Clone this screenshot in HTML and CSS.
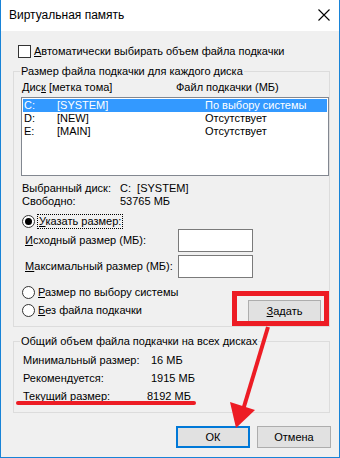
FILE: index.html
```html
<!DOCTYPE html>
<html lang="ru">
<head>
<meta charset="utf-8">
<title>Виртуальная память</title>
<link rel="stylesheet" href="styles.css">
</head>
<body>
<div class="window">
  <div class="titlebar">
    <span class="title">Виртуальная память</span>
    <svg class="close" width="12" height="12" viewBox="0 0 12 12"><path d="M0.5 0.5 L11.5 11.5 M11.5 0.5 L0.5 11.5" stroke="#000" stroke-width="1.1" fill="none"/></svg>
  </div>
  <div class="content">
    <div class="check-row"><span class="checkbox"></span><span class="check-label"><u>А</u>втоматически выбирать объем файла подкачки</span></div>

    <fieldset class="group g1">
      <legend>Размер файла подкачки для каждого диска</legend>
      <div class="list-head"><span class="col-drive">Дис<u>к</u> [метка тома]</span><span>Файл подкачки (МБ)</span></div>
      <div class="listbox">
        <div class="lrow sel"><span class="c1">C:</span><span class="c2">[SYSTEM]</span><span>По выбору системы</span></div>
        <div class="lrow"><span class="c1">D:</span><span class="c2">[NEW]</span><span>Отсутствует</span></div>
        <div class="lrow"><span class="c1">E:</span><span class="c2">[MAIN]</span><span>Отсутствует</span></div>
      </div>
      <div class="info">
        <div class="irow"><span class="ilabel">Выбранный диск:</span><span>C:&nbsp; [SYSTEM]</span></div>
        <div class="irow"><span class="ilabel">Свободно:</span><span>53765 МБ</span></div>
      </div>
      <div class="radio-row custom"><span class="radio on"></span><span class="focus"><u>У</u>казать размер:</span></div>
      <div class="field-row"><span class="flabel"><u>И</u>сходный размер (МБ):</span><span class="input"></span></div>
      <div class="field-row second"><span class="flabel"><u>М</u>аксимальный размер (МБ):</span><span class="input"></span></div>
      <div class="bottom-row">
        <div class="radios">
          <div class="radio-row"><span class="radio"></span><span class="rlabel"><u>Р</u>азмер по выбору системы</span></div>
          <div class="radio-row"><span class="radio"></span><span class="rlabel"><u>Б</u>ез файла подкачки</span></div>
        </div>
        <button class="btn set"><u>З</u>адать</button>
      </div>
    </fieldset>

    <fieldset class="group g2">
      <legend>Общий объем файла подкачки на всех дисках</legend>
      <div class="trow"><span class="tlabel">Минимальный размер:</span><span>16 МБ</span></div>
      <div class="trow"><span class="tlabel">Рекомендуется:</span><span>1915 МБ</span></div>
      <div class="trow"><span class="tlabel">Текущий размер:</span><span class="shift">8192 МБ</span></div>
    </fieldset>

    <div class="buttons">
      <button class="btn ok">ОК</button>
      <button class="btn">Отмена</button>
    </div>
  </div>

  <svg class="annot" width="340" height="458" viewBox="0 0 340 458">
    <rect x="234.5" y="293.5" width="92" height="30" fill="none" stroke="#ed1c24" stroke-width="5"/>
    <line x1="18" y1="403" x2="194" y2="403" stroke="#ed1c24" stroke-width="4" stroke-linecap="round"/>
    <line x1="268" y1="327" x2="243" y2="410" stroke="#ed1c24" stroke-width="4"/>
    <polygon points="230,402 255,410 236,428" fill="#ed1c24"/>
  </svg>
</div>
</body>
</html>
```

FILE: styles.css
```css
* { box-sizing: border-box; }
html, body { margin: 0; padding: 0; }
body {
  font-family: "Liberation Sans", Arial, sans-serif;
  font-size: 11px;
  line-height: 15px;
  color: #000;
  background: #f0f0f0;
  white-space: nowrap;
}
u { text-decoration: underline; text-underline-offset: 1px; }

.window {
  position: relative;
  width: 340px;
  height: 458px;
  border: 1px solid #1883d7;
  border-top: none;
  background: #f0f0f0;
  overflow: hidden;
}
.titlebar {
  height: 31px;
  background: #fff;
  display: flex;
  align-items: center;
  justify-content: space-between;
  padding: 0 9px 0 8px;
}
.title { font-size: 12px; }
.close { display: block; margin-top: -1px; }

.content {
  padding: 0 9px 0 12px;
}

.check-row {
  margin-top: 13px;
  height: 15px;
  display: flex;
  align-items: center;
  padding-left: 5px;
}
.checkbox {
  width: 13px;
  height: 13px;
  border: 1px solid #333;
  background: #fff;
  margin-right: 3px;
}

.group {
  margin: 0;
  border: 1px solid #dcdcdc;
  padding: 0 0 0 7px;
  min-width: 0;
}
.group legend {
  padding: 0 1px;
  margin-left: -1px;
  line-height: 15px;
  height: 15px;
}
.g1 { margin-top: 5px; padding-top: 1px; padding-bottom: 4px; }

.list-head {
  height: 15px;
  display: flex;
  padding-left: 1px;
}
.col-drive { width: 154px; }

.listbox {
  margin-top: 2px;
  height: 79px;
  background: #fff;
  border: 1px solid #828790;
  padding: 1px;
}
.lrow {
  height: 13px;
  line-height: 13px;
  display: flex;
  padding-left: 1px;
}
.lrow.sel { background: #3399ff; color: #fff; }
.c1 { width: 33px; }
.c2 { width: 148px; }

.info { margin-top: 6px; }
.irow { height: 13px; line-height: 13px; display: flex; padding-left: 1px; }
.ilabel { width: 98px; }

.radio-row {
  height: 18px;
  display: flex;
  align-items: center;
  padding-left: 1px;
}
.radio-row.custom { margin-top: 6px; height: 15px; }
.radio {
  width: 13px;
  height: 13px;
  border: 1px solid #333;
  border-radius: 50%;
  background: #fff;
  display: flex;
  align-items: center;
  justify-content: center;
  flex: none;
}
.radio.on::after {
  content: "";
  width: 7px;
  height: 7px;
  border-radius: 50%;
  background: #000;
}
.focus {
  margin-left: 2px;
  padding: 0 1px;
  height: 15px;
  border: 1px dotted #000;
  line-height: 13px;
}
.rlabel { margin-left: 3px; }

.field-row {
  height: 23px;
  display: flex;
  align-items: center;
  padding-left: 4px;
}
.field-row.second { margin-top: 3px; }
.flabel { width: 153px; }
.input {
  width: 75px;
  height: 23px;
  background: #fff;
  border: 1px solid #7a7a7a;
}

.bottom-row {
  margin-top: 5px;
  display: flex;
  justify-content: space-between;
  align-items: flex-start;
}

.btn {
  font: inherit;
  color: #000;
  background: #e1e1e1;
  border: 1px solid #adadad;
  height: 22px;
  padding: 0;
  margin: 0;
  line-height: 18px;
}
.btn.set { width: 73px; margin-top: 17px; margin-right: 8px; }

.g2 { margin-top: 7px; padding-top: 2px; padding-bottom: 7px; }
.trow {
  height: 18px;
  display: flex;
  align-items: center;
  padding-left: 2px;
}
.tlabel { width: 128px; }
.shift { margin-left: -4px; }

.buttons {
  margin-top: 13px;
  margin-right: -1px;
  display: flex;
  justify-content: flex-end;
  gap: 7px;
}
.buttons .btn { width: 74px; }
.btn.ok { border: 2px solid #0078d7; }

.annot {
  position: absolute;
  left: -1px;
  top: 0;
  pointer-events: none;
}
```
